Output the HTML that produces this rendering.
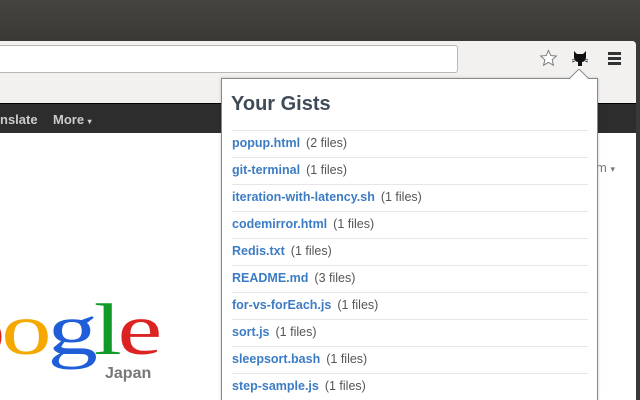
<!DOCTYPE html>
<html><head><style>
html,body{margin:0;width:640px;height:400px;overflow:hidden}
body{position:relative;font-family:"Liberation Sans",Arial,sans-serif;background:#3a3935}
.title{position:absolute;left:0;top:0;width:640px;height:42px;background:linear-gradient(#45443f,#3a3935)}
.win{position:absolute;left:0;top:41px;width:636px;height:359px;background:#fff;border-top-right-radius:4px;overflow:hidden}
.tool{position:absolute;left:0;top:41px;width:636px;height:62px;background:#f2f1f0;border-top-right-radius:4px}
.omni{position:absolute;left:0;top:45px;width:457px;height:26px;background:#fff;border:1px solid #b9b7b3;border-left:none;border-radius:0 3px 3px 0}
.bar{position:absolute;left:0;top:103px;width:636px;height:29px;background:#2d2d2d;border-top:1px solid #000}
.bar span{position:absolute;top:8px;color:#ccc;font-weight:bold;font-size:13px}
.pop{position:absolute;left:221px;top:78px;width:375px;height:321px;background:#fff;border:1px solid #888;border-bottom:none;box-shadow:0 0 3px rgba(0,0,0,.2)}
.pop h1{margin:0;position:absolute;left:9px;top:14px;font-size:20px;color:#3f4b57;font-weight:bold}
.row{position:absolute;left:10px;width:356px;height:27px;border-top:1px solid #e6e6e6;font-size:12.5px;line-height:25px}
.row b{color:#3c7cc4}.row i{font-style:normal;color:#555;margin-left:6px}
</style></head><body>
<div class="title"></div>
<div class="win">
<div style="position:absolute;left:-45px;top:252px;font-family:'Liberation Serif',serif;font-size:73px;line-height:73px;letter-spacing:-3px;white-space:nowrap;transform:scale(1.38,1);transform-origin:0 0"><span style="color:#d22">o</span><span style="color:#f5a800">o</span><span style="color:#1f5ed8">g</span><span style="color:#129a29">l</span><span style="color:#d22">e</span></div>
</div>
<div class="tool"></div>
<div class="omni"></div>
<svg style="position:absolute;left:539px;top:49px" width="19" height="19" viewBox="0 0 20 20"><path d="M10 1.5l2.4 5.4 5.9.5-4.5 3.9 1.4 5.8L10 14l-5.2 3.1 1.4-5.8L1.7 7.4l5.9-.5z" fill="#fff" stroke="#777" stroke-width="1"/></svg>
<svg style="position:absolute;left:572px;top:50px" width="16" height="18" viewBox="0 0 16 18"><path d="M2 1l3 3h6l3-3v6c0 3-2 5-4 5v4h-4v-4c-2 0-4-2-4-5z" fill="#111"/><path d="M0 10l3 -1M0 12l3-1M16 10l-3-1M16 12l-3-1" stroke="#555"/></svg>
<div style="position:absolute;left:608px;top:52px;width:13px;height:3px;background:#333;box-shadow:0 5px 0 #333,0 10px 0 #333"></div>
<div class="bar"><span style="left:0">nslate</span><span style="left:53px">More <small style="font-size:8px">▾</small></span></div>
<div style="position:absolute;left:596px;top:160px;font-size:13px;color:#777">m <span style="font-size:9px">▾</span></div>
<div style="position:absolute;left:105px;top:365px;font-size:16px;font-weight:bold;color:#777">Japan</div>
<div class="pop"><h1>Your Gists</h1>
<div class="row" style="top:51px"><b>popup.html</b><i>(2 files)</i></div>
<div class="row" style="top:78px"><b>git-terminal</b><i>(1 files)</i></div>
<div class="row" style="top:105px"><b>iteration-with-latency.sh</b><i>(1 files)</i></div>
<div class="row" style="top:132px"><b>codemirror.html</b><i>(1 files)</i></div>
<div class="row" style="top:159px"><b>Redis.txt</b><i>(1 files)</i></div>
<div class="row" style="top:186px"><b>README.md</b><i>(3 files)</i></div>
<div class="row" style="top:213px"><b>for-vs-forEach.js</b><i>(1 files)</i></div>
<div class="row" style="top:240px"><b>sort.js</b><i>(1 files)</i></div>
<div class="row" style="top:267px"><b>sleepsort.bash</b><i>(1 files)</i></div>
<div class="row" style="top:294px;height:26px"><b>step-sample.js</b><i>(1 files)</i></div>
</div>
<svg style="position:absolute;left:569px;top:69px" width="22" height="11"><path d="M0 10L10 0L20 10" fill="#fff" stroke="#888"/><rect x="1" y="10" width="18" height="2" fill="#fff"/></svg>
</body></html>
